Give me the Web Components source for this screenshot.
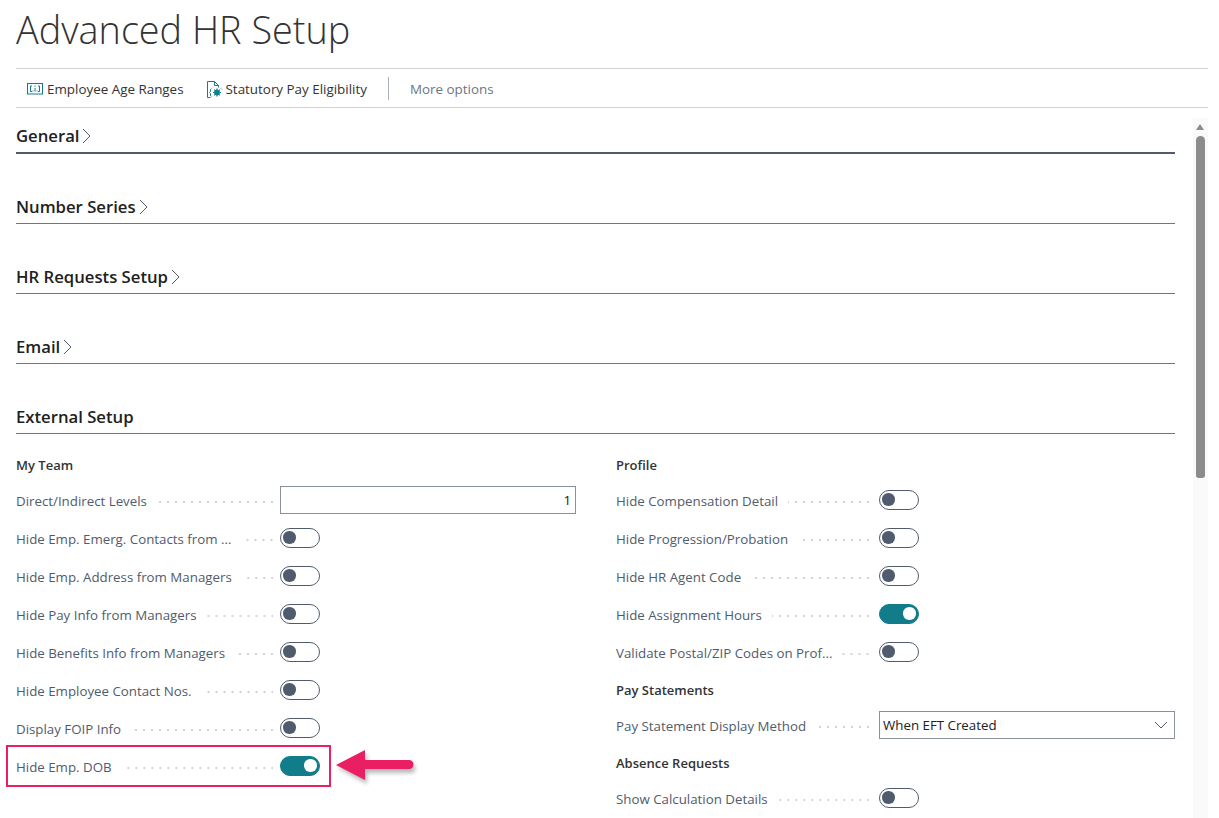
<!DOCTYPE html>
<html>
<head>
<meta charset="utf-8">
<title>Advanced HR Setup</title>
<style>
html, body { margin: 0; height: 818px; overflow: hidden; background: #fff; }
body { font-family: "Open Sans", "Liberation Sans", sans-serif; font-size: 13px; color: #505c6d; }
</style>
</head>
<body>
<hr-page>
  <span slot="title">Advanced HR Setup</span>
  <hr-toolbar slot="toolbar">
    <tool-button icon="ranges">Employee Age Ranges</tool-button>
    <tool-button icon="statutory">Statutory Pay Eligibility</tool-button>
    <span slot="more">More options</span>
  </hr-toolbar>
  <fast-tab heavy>General</fast-tab>
  <fast-tab>Number Series</fast-tab>
  <fast-tab>HR Requests Setup</fast-tab>
  <fast-tab>Email</fast-tab>
  <fast-tab open>External Setup
    <field-columns slot="body">
      <div slot="left">
        <group-title>My Team</group-title>
        <field-row label="Direct/Indirect Levels"><num-box>1</num-box></field-row>
        <field-row label="Hide Emp. Emerg. Contacts from ..."><hr-toggle></hr-toggle></field-row>
        <field-row label="Hide Emp. Address from Managers"><hr-toggle></hr-toggle></field-row>
        <field-row label="Hide Pay Info from Managers"><hr-toggle></hr-toggle></field-row>
        <field-row label="Hide Benefits Info from Managers"><hr-toggle></hr-toggle></field-row>
        <field-row label="Hide Employee Contact Nos."><hr-toggle></hr-toggle></field-row>
        <field-row label="Display FOIP Info"><hr-toggle></hr-toggle></field-row>
        <hr-callout><field-row label="Hide Emp. DOB"><hr-toggle on></hr-toggle></field-row></hr-callout>
      </div>
      <div slot="right" style="--label-width: 263px; --label-pad: 10px">
        <group-title>Profile</group-title>
        <field-row label="Hide Compensation Detail"><hr-toggle></hr-toggle></field-row>
        <field-row label="Hide Progression/Probation"><hr-toggle></hr-toggle></field-row>
        <field-row label="Hide HR Agent Code"><hr-toggle></hr-toggle></field-row>
        <field-row label="Hide Assignment Hours"><hr-toggle on></hr-toggle></field-row>
        <field-row label="Validate Postal/ZIP Codes on Prof..."><hr-toggle></hr-toggle></field-row>
        <group-title tall>Pay Statements</group-title>
        <field-row short label="Pay Statement Display Method"><select-box>When EFT Created</select-box></field-row>
        <group-title tall style="line-height: 38px">Absence Requests</group-title>
        <field-row label="Show Calculation Details"><hr-toggle></hr-toggle></field-row>
      </div>
    </field-columns>
  </fast-tab>
</hr-page>

<script>
// small helper, every element here is just a template in a shadow root
function define(name, html, connected) {
  const template = document.createElement("template");
  template.innerHTML = html;
  customElements.define(name, class extends HTMLElement {
    constructor() {
      super();
      this.attachShadow({mode: "open"}).append(template.content.cloneNode(true));
    }
    connectedCallback() {
      if (connected) connected.call(this, this.shadowRoot);
    }
  });
}

define("hr-page", `
<style>
:host { display: block; height: 818px; overflow: hidden; }
h1 {
  margin: 0;
  padding-left: 16px;
  height: 68px;
  box-sizing: border-box;
  padding-top: 4px;
  font: 300 37.8px/52px "Open Sans", sans-serif;
  color: #333;
}
.bar { margin-left: 16px; width: 1192px; }
.main { display: flex; }
.content { width: 1159px; margin-left: 16px; padding-top: 12px; }
hr-scrollbar { margin-left: 18px; }
</style>
<h1><slot name="title"></slot></h1>
<div class="bar"><slot name="toolbar"></slot></div>
<div class="main">
  <div class="content"><slot></slot></div>
  <hr-scrollbar></hr-scrollbar>
</div>
`);

define("hr-toolbar", `
<style>
:host {
  display: flex;
  align-items: center;
  height: 36px;
  padding: 2px 0 0 11px;
  border-top: 1px solid #d1d1d1;
  border-bottom: 1px solid #d1d1d1;
  font-size: 13.4px;
}
.sep { width: 1px; height: 23px; margin: -2px 21px 0 -2px; background: #a9afb8; }
::slotted([slot="more"]) { color: #6c7684; }
</style>
<slot></slot>
<div class="sep"></div>
<slot name="more"></slot>
`);

const toolIcons = {
  ranges: `<svg width="16" height="12" viewBox="0 0 16 12" fill="none" stroke="#117d8a" stroke-width="1">
    <rect x=".5" y=".5" width="15" height="10.500"/>
    <path d="M5 3H3.500v5.500H5M11 3h1.500v5.500H11M8 5v3.500M8 2.500v1.200M6 7.500v1M10 7.500v1"/></svg>`,
  statutory: `<svg width="16" height="17" viewBox="0 0 16 17" fill="none" stroke="#117d8a" stroke-width="1" style="margin-right:-1px">
    <path d="M3.500 16.500H.5V.5h7l4 4v2M7.500.5v4h4"/>
    <path d="M4.500 7.500 3.500 8.500v2l-1 1 1 1v2l1 1M14 7.500l1 1"/>
    <circle cx="10" cy="11.500" r="2.500" fill="#117d8a"/>
    <path d="M10 7.500v1.500M10 14v1.500M6 11.500h1.500M12.500 11.500H14M7.200 8.700l1 1M12.800 8.700l-1 1M7.200 14.300l1-1M12.800 14.300l-1-1" stroke-width="1.200"/></svg>`
};

define("tool-button", `
<style>
:host { display: inline-flex; align-items: center; gap: 4px; margin-right: 23px; color: #333; white-space: nowrap; }
.icon { display: flex; }
</style>
<span class="icon"></span><slot></slot>
`, function (root) {
  root.querySelector(".icon").innerHTML = toolIcons[this.getAttribute("icon")];
});

define("fast-tab", `
<style>
:host { display: block; margin-bottom: 37px; }
.head {
  display: flex;
  align-items: center;
  gap: 3px;
  height: 30px;
  padding-bottom: 2px;
  border-bottom: 1px solid #6d7683;
  font-size: 16.7px;
  font-weight: 600;
  color: #212121;
}
:host([heavy]) .head { border-bottom: 2px solid #505c6d; }
svg { margin-top: 1px; }
:host([open]) svg { display: none; }
</style>
<div class="head">
  <slot></slot>
  <svg width="9" height="16" viewBox="0 0 9 16" fill="none" stroke="#505c6d" stroke-width="1"><path d="M1 1l7 7-7 7"/></svg>
</div>
<slot name="body"></slot>
`);

define("field-columns", `
<style>
:host { display: grid; grid-template-columns: 560px 559px; column-gap: 40px; padding-top: 13px; }
</style>
<slot name="left"></slot>
<slot name="right"></slot>
`);

define("group-title", `
<style>
:host { display: block; height: 35px; line-height: 37px; font-size: 13px; font-weight: 600; color: #333; }
:host([tall]) { height: 36px; }
</style>
<slot></slot>
`);

define("field-row", `
<style>
:host { display: grid; grid-template-columns: var(--label-width, 264px) 1fr; align-items: center; height: 38px; }
:host([short]) { height: 36px; }
.label { display: flex; align-items: center; min-width: 0; padding-right: var(--label-pad, 7px); box-sizing: border-box; }
.text { white-space: nowrap; flex: none; margin-right: 10px; font-size: 13.3px; }
.dots {
  flex: 1;
  height: 2px;
  margin-top: 2px;
  background-image: linear-gradient(to right, #cfd2d6 2px, transparent 2px);
  background-size: 8px 2px;
  background-position: right -6px center;
  background-repeat: repeat-x;
}
.control { display: flex; align-items: center; margin-top: -2px; }
</style>
<div class="label"><span class="text"></span><span class="dots"></span></div>
<div class="control"><slot></slot></div>
`, function (root) {
  root.querySelector(".text").textContent = this.getAttribute("label");
});

define("hr-toggle", `
<style>
:host {
  display: block;
  box-sizing: border-box;
  width: 40px;
  height: 20px;
  border: 1.3px solid #505c6d;
  border-radius: 10px;
  position: relative;
}
.knob {
  position: absolute;
  left: 2.4px;
  top: 2.400px;
  width: 12.500px;
  height: 12.500px;
  border-radius: 50%;
  background: #505c6d;
}
:host([on]) { background: #117d8a; border-color: #117d8a; }
:host([on]) .knob { left: auto; right: 2.4px; background: #fff; }
</style>
<div class="knob"></div>
`);

define("num-box", `
<style>
:host {
  display: block;
  flex: 1;
  box-sizing: border-box;
  height: 28px;
  line-height: 26px;
  border: 1px solid #8a919c;
  padding: 0 4px;
  text-align: right;
  font-size: 13.3px;
  color: #212121;
}
</style>
<slot></slot>
`);

define("select-box", `
<style>
:host {
  display: flex;
  flex: 1;
  align-items: center;
  justify-content: space-between;
  box-sizing: border-box;
  height: 28px;
  border: 1px solid #8a919c;
  padding: 0 6px 0 3px;
  font-size: 13.3px;
  color: #212121;
}
</style>
<slot></slot>
<svg width="14" height="8" viewBox="0 0 14 8" fill="none" stroke="#505c6d" stroke-width="1"><path d="M1 1l6 6 6-6"/></svg>
`);

// the pink frame and arrow were drawn over the screenshot, so they sit on top
define("hr-callout", `
<style>
:host { display: block; position: relative; }
.frame {
  position: absolute;
  left: -10px;
  top: -3px;
  width: 325px;
  height: 42px;
  box-sizing: border-box;
  border: 2px solid #e91e63;
}
svg { position: absolute; left: 320px; top: 2px; overflow: visible; }
</style>
<slot></slot>
<div class="frame"></div>
<svg width="78" height="32" viewBox="0 0 78 32">
  <path fill="#000" opacity=".28" style="filter:blur(2px)" d="M1 15 30 1v10h44a4.500 4.500 0 0 1 0 9H30v11z" transform="translate(1 3)"/>
  <path fill="#e91e63" d="M0 15 29 0v10h44a4.500 4.500 0 0 1 0 9H29v11z"/>
</svg>
`);

define("hr-scrollbar", `
<style>
:host { display: block; position: relative; width: 15px; height: 700px; margin-top: 10px; background: #fafafa; flex: none; }
.up { position: absolute; left: 3px; top: 6px; width: 0; height: 0; border: 4.500px solid transparent; border-top: 0; border-bottom: 6px solid #8c8c8c; }
.thumb { position: absolute; left: 3px; top: 18px; width: 9px; height: 342px; border-radius: 5px 5px 3px 3px; background: #8c8c8c; }
</style>
<div class="up"></div>
<div class="thumb"></div>
`);
</script>
</body>
</html>
